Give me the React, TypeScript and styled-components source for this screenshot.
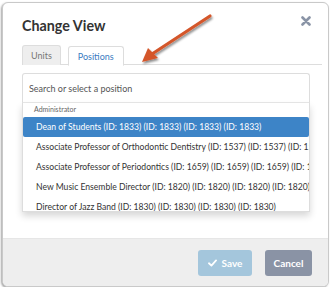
import React from "react";
import styled, { createGlobalStyle } from "styled-components";

const Global = createGlobalStyle`
  html, body { margin: 0; padding: 0; background: #ffffff; }
  body { font-family: Lato, "Open Sans", "Liberation Sans", sans-serif; }
  * { box-sizing: border-box; }
`;

const Modal = styled.div`
  position: relative;
  margin: 2px 3px 0 2px;
  width: 327px;
  height: 285px;
  border: 1px solid #c9c9c9;
  border-radius: 6px;
  box-shadow: -1px 1px 2px rgba(0, 0, 0, 0.35);
  background: #ffffff;
  display: flex;
  flex-direction: column;
  overflow: hidden;
`;

const Header = styled.div`
  display: flex;
  justify-content: space-between;
  align-items: flex-start;
  padding: 13px 17px 0 19px;
  height: 42px;
`;

const Title = styled.h1`
  margin: 0;
  font-size: 14.3px;
  line-height: 20px;
  font-weight: 700;
  color: #333333;
`;

const CloseButton = styled.button`
  border: 0;
  background: none;
  padding: 0;
  width: 10px;
  height: 10px;
  display: flex;
  cursor: pointer;
`;

const Body = styled.div`
  flex: 1;
  padding: 0 6px 0 19px;
  position: relative;
`;

const TabBar = styled.div`
  display: flex;
  gap: 7px;
  border-bottom: 1px solid #dddddd;
  height: 20px;
`;

const Tab = styled.div<{ $active?: boolean }>`
  height: 20px;
  padding: 0 ${(p) => (p.$active ? "9px" : "8px")};
  border: 1px solid #dddddd;
  border-bottom: ${(p) => (p.$active ? "1px solid #ffffff" : "0")};
  border-radius: 3px 3px 0 0;
  background: ${(p) => (p.$active ? "#ffffff" : "#eeeeee")};
  color: ${(p) => (p.$active ? "#3a7bbf" : "#777777")};
  font-size: 9px;
  line-height: 19px;
  position: relative;
  top: ${(p) => (p.$active ? "1px" : "0")};
`;

const Pane = styled.div`
  position: relative;
  padding-top: 8px;
  width: 288px;
`;

const SearchBox = styled.div`
  height: 30px;
  border: 1px solid #dddddd;
  border-bottom-color: #e8e8e8;
  border-radius: 3px 3px 0 0;
  padding: 0 6px;
  font-size: 9px;
  line-height: 29px;
  color: #555555;
`;

const Dropdown = styled.div`
  position: absolute;
  left: 0;
  top: 38px;
  width: 288px;
  height: 109px;
  background: #ffffff;
  border: 1px solid #dddddd;
  border-top: 0;
  box-shadow: 0 4px 7px rgba(0, 0, 0, 0.16);
  overflow: hidden;
  z-index: 2;
`;

const GroupLabel = styled.div`
  height: 14px;
  padding-left: 11px;
  font-size: 7px;
  line-height: 13px;
  color: #666666;
`;

const Option = styled.div<{ $active?: boolean }>`
  height: 20px;
  padding-left: 13px;
  font-size: 8.6px;
  line-height: 20px;
  white-space: nowrap;
  overflow: hidden;
  color: ${(p) => (p.$active ? "#ffffff" : "#333333")};
  background: ${(p) => (p.$active ? "#3d84c7" : "transparent")};
  border-radius: ${(p) => (p.$active ? "2px" : "0")};
`;

const Arrow = styled.svg`
  position: absolute;
  left: 130px;
  top: 5px;
  z-index: 3;
  overflow: visible;
`;

const Footer = styled.div`
  height: 48px;
  background: #eeeeee;
  border-top: 1px solid #e6e6e6;
  display: flex;
  justify-content: flex-end;
  align-items: center;
  gap: 13px;
  padding: 0 16px 0 0;
`;

const Button = styled.button<{ $variant: "save" | "cancel" }>`
  height: 26px;
  border: 0;
  border-radius: 3px;
  padding: 0;
  width: ${(p) => (p.$variant === "save" ? "54px" : "47px")};
  background: ${(p) => (p.$variant === "save" ? "#a4c6dc" : "#8a93a5")};
  color: #ffffff;
  font-family: Lato, "Open Sans", "Liberation Sans", sans-serif;
  font-size: 10px;
  font-weight: 700;
  display: flex;
  align-items: center;
  justify-content: center;
  gap: 5px;
`;

const options = [
  "Dean of Students (ID: 1833) (ID: 1833) (ID: 1833) (ID: 1833)",
  "Associate Professor of Orthodontic Dentistry (ID: 1537) (ID: 1537) (ID: 1537) (ID: 1537)",
  "Associate Professor of Periodontics (ID: 1659) (ID: 1659) (ID: 1659) (ID: 1659)",
  "New Music Ensemble Director (ID: 1820) (ID: 1820) (ID: 1820) (ID: 1820)",
  "Director of Jazz Band (ID: 1830) (ID: 1830) (ID: 1830) (ID: 1830)",
];

export default function App() {
  return (
    <>
      <Global />
      <Modal>
        <Header>
          <Title>Change View</Title>
          <CloseButton aria-label="Close">
            <svg width="10" height="10" viewBox="0 0 10 10">
              <path d="M1.5 1.5 L8.5 8.5 M8.5 1.5 L1.5 8.5" stroke="#8a94a6" strokeWidth="2.6" strokeLinecap="round" />
            </svg>
          </CloseButton>
        </Header>
        <Body>
          <TabBar>
            <Tab>Units</Tab>
            <Tab $active>Positions</Tab>
          </TabBar>
          <Pane>
            <SearchBox>Search or select a position</SearchBox>
            <Dropdown>
              <GroupLabel>Administrator</GroupLabel>
              {options.map((o, i) => (
                <Option key={i} $active={i === 0}>
                  {o}
                </Option>
              ))}
            </Dropdown>
          </Pane>
        </Body>
        <Arrow width="90" height="60" viewBox="0 0 90 60">
          <defs>
            <filter id="sh" x="-20%" y="-20%" width="150%" height="150%">
              <feDropShadow dx="1" dy="2" stdDeviation="1" floodColor="#000" floodOpacity="0.45" />
            </filter>
          </defs>
          <g filter="url(#sh)">
            <path d="M77 8 L19 46" stroke="#d4572b" strokeWidth="3.2" strokeLinecap="round" />
            <path d="M9 54 L15 40 L25 50 Z" fill="#d4572b" />
          </g>
        </Arrow>
        <Footer>
          <Button $variant="save">
            <svg width="9" height="8" viewBox="0 0 10 9">
              <path d="M1 4.8 L3.8 7.4 L9 1.6" stroke="#ffffff" strokeWidth="2" fill="none" strokeLinecap="round" strokeLinejoin="round" />
            </svg>
            Save
          </Button>
          <Button $variant="cancel">Cancel</Button>
        </Footer>
      </Modal>
    </>
  );
}
